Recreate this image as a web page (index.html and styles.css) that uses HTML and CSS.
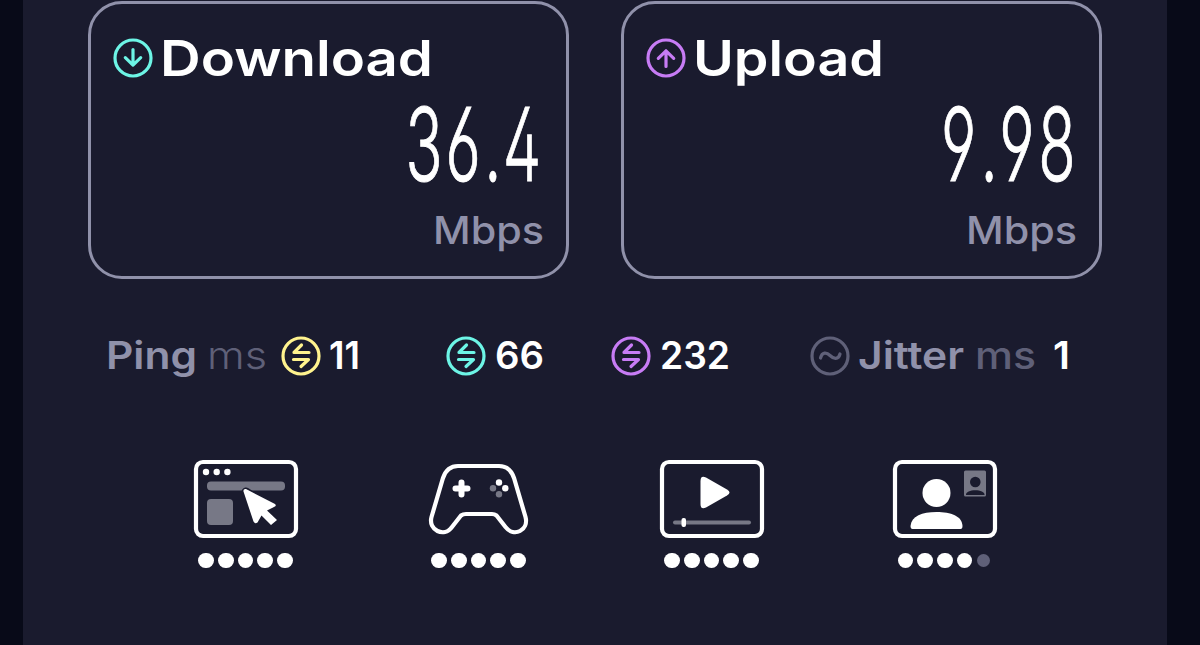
FILE: index.html
```
<!DOCTYPE html>
<html lang="en">
<head>
    <meta charset="UTF-8">
    <meta name="viewport" content="width=device-width, initial-scale=1.0">
    <title>Speed Test Results</title>
    <link rel="stylesheet" href="styles.css">
</head>
<body>
    <div class="panel">
        <div class="cards">
            <div class="card">
                <div class="card-title">
                    <svg class="ring cyan" viewBox="0 0 40 40"><circle cx="20" cy="20" r="18"/><path d="M20 11.500v15.500M12.300 19.700l7.700 7.500 7.700-7.500"/></svg>
                    <svg class="title" width="290" height="60"><text x="3" y="48" textLength="273" lengthAdjust="spacingAndGlyphs">Download</text></svg>
                </div>
                <svg class="speed" width="150" height="90"><text transform="scale(.6 1)" x="20.800 87.500 152 183" y="80">36.4</text></svg>
                <svg class="unit" width="120" height="50"><text x="8" y="33" textLength="111" lengthAdjust="spacingAndGlyphs">Mbps</text></svg>
            </div>
            <div class="card">
                <div class="card-title">
                    <svg class="ring purple" viewBox="0 0 40 40"><circle cx="20" cy="20" r="18"/><path d="M20 28.500V13M12.300 20.300l7.700-7.500 7.700 7.500"/></svg>
                    <svg class="title" width="290" height="60"><text x="3" y="48" textLength="191" lengthAdjust="spacingAndGlyphs">Upload</text></svg>
                </div>
                <svg class="speed" width="150" height="90"><text transform="scale(.6 1)" x="25 91 122 187" y="80">9.98</text></svg>
                <svg class="unit" width="120" height="50"><text x="8" y="33" textLength="111" lengthAdjust="spacingAndGlyphs">Mbps</text></svg>
            </div>
        </div>

        <div class="stats">
            <div class="stat ping">
                <svg class="label" width="91" height="50"><text x="0" y="38" textLength="91" lengthAdjust="spacingAndGlyphs">Ping</text></svg>
                <svg class="label ms thin" width="60" height="50"><text x="0" y="38" textLength="60" lengthAdjust="spacingAndGlyphs">ms</text></svg>
                <svg class="ring yellow" viewBox="0 0 40 40"><circle cx="20" cy="20" r="18"/><path d="M28 16.500H13L20.500 9M12.500 23.500H27.500L20 30.500"/></svg>
                <svg class="label value" width="30" height="50"><text x="0" y="38" textLength="31" lengthAdjust="spacingAndGlyphs">11</text></svg>
            </div>
            <div class="stat down">
                <svg class="ring cyan" viewBox="0 0 40 40"><circle cx="20" cy="20" r="18"/><path d="M28 16.500H13L20.500 9M12.500 23.500H27.500L20 30.500"/></svg>
                <svg class="label value" width="50" height="50"><text x="0" y="38" textLength="49" lengthAdjust="spacingAndGlyphs">66</text></svg>
            </div>
            <div class="stat up">
                <svg class="ring purple" viewBox="0 0 40 40"><circle cx="20" cy="20" r="18"/><path d="M28 16.500H13L20.500 9M12.500 23.500H27.500L20 30.500"/></svg>
                <svg class="label value" width="72" height="50"><text x="0" y="38" textLength="70" lengthAdjust="spacingAndGlyphs">232</text></svg>
            </div>
            <div class="stat jitter">
                <svg class="ring gray" viewBox="0 0 40 40"><circle cx="20" cy="20" r="18"/><path d="M10.500 22C12 16 16.500 16 20 19.500S28.500 24 30 18"/></svg>
                <svg class="label" width="108" height="50"><text x="0" y="38" textLength="106" lengthAdjust="spacingAndGlyphs">Jitter</text></svg>
                <svg class="label ms" width="62" height="50"><text x="0" y="38" textLength="61" lengthAdjust="spacingAndGlyphs">ms</text></svg>
                <svg class="label value" width="18" height="50"><text x="0" y="38" textLength="17" lengthAdjust="spacingAndGlyphs">1</text></svg>
            </div>
        </div>

        <div class="scores">
            <div class="score">
                <svg class="picture" viewBox="0 0 104 78">
                    <rect class="frame" x="2" y="2" width="100" height="74" rx="7"/>
                    <g class="solid"><circle cx="12" cy="12" r="3.2"/><circle cx="22.7" cy="12" r="3.2"/><circle cx="33.4" cy="12" r="3.2"/></g>
                    <rect class="dim" x="13" y="21.500" width="78" height="9" rx="4"/>
                    <rect class="dim" x="13" y="39" width="26" height="26" rx="4"/>
                    <path class="cutout" d="M52 32 61 58 66 56 76 48Z"/>
                    <path class="solid" d="M49.500 31.500Q49 28.500 52 29L81 44Q83 46 80 47L73 50.500 83 60 77 65 67.500 55.500 63.500 62.500Q61 64.500 59.500 61.500Z"/>
                </svg>
                <div class="dots"><i></i><i></i><i></i><i></i><i></i></div>
            </div>
            <div class="score">
                <svg class="picture" viewBox="0 0 104 78">
                    <path class="frame" d="M31 6H72Q83 6 87 18L98.500 57C102 70 87 78 78.500 67L69.500 55.500Q67.500 54 65 54H39Q36 54 34 55.500L25 67C17 78 1 70 4.500 57L16 18Q20 6 31 6Z"/>
                    <path class="cross" d="M34.500 22.500V34.500M28.500 28.500H40.500"/>
                    <g class="solid"><circle cx="72" cy="22.500" r="3.200"/><circle cx="78.300" cy="28.300" r="3.200"/></g>
                    <g class="dim"><circle cx="66" cy="28.300" r="3.200"/><circle cx="72" cy="34.200" r="3.200"/></g>
                </svg>
                <div class="dots"><i></i><i></i><i></i><i></i><i></i></div>
            </div>
            <div class="score">
                <svg class="picture" viewBox="0 0 104 78">
                    <rect class="frame" x="2" y="2" width="100" height="74" rx="7"/>
                    <path class="solid" d="M40.500 21Q40.500 15 46 17.500L67 29.500Q72 32.500 67 35.500L46 47.500Q40.500 50 40.500 44Z"/>
                    <rect class="dim" x="13" y="60.500" width="78" height="4" rx="2"/>
                    <rect class="solid" x="21.500" y="58" width="4.500" height="9" rx="2"/>
                </svg>
                <div class="dots"><i></i><i></i><i></i><i></i><i></i></div>
            </div>
            <div class="score">
                <svg class="picture" viewBox="0 0 104 78">
                    <rect class="frame" x="2" y="2" width="100" height="74" rx="7"/>
                    <circle class="solid" cx="43.500" cy="33" r="14"/>
                    <path class="solid" d="M19.500 69Q17.500 69 17.500 66C18.500 56 29 52 43.500 52S69 56 69.500 66Q69.500 69 67.500 69Z"/>
                    <rect class="dim" x="71" y="10.500" width="22" height="26" rx="1.500"/>
                    <g class="person"><circle cx="82.300" cy="22" r="5.300"/><path d="M73 35C72 28.500 92.500 28.500 91.500 35Z"/></g>
                </svg>
                <div class="dots"><i></i><i></i><i></i><i></i><i class="off"></i></div>
            </div>
        </div>
    </div>
</body>
</html>
```
FILE: styles.css
```
* { box-sizing: border-box; }
body { margin: 0; background: #080a18; font-family: Inter, "Liberation Sans", sans-serif; overflow: hidden; }
svg { display: block; flex: none; overflow: visible; }

.panel { width: 1144px; height: 645px; margin-left: 23px; padding: 1px 65px 0; background: #1a1b2e; }

.cards { display: flex; gap: 52px; }
.card { width: 481px; height: 278px; border: 3px solid #9091aa; border-radius: 34px; padding: 23px 21px 0 22px; display: flex; flex-direction: column; align-items: flex-end; }
.card-title { display: flex; width: 100%; height: 62px; align-items: center; gap: 4px; }
.title text { fill: #fff; font-size: 50px; font-weight: 600; }
.speed { margin-top: 12px; margin-right: 2px; }
.speed text { fill: #fff; stroke: #fff; stroke-width: 1px; font-size: 102px; font-weight: 300; font-feature-settings: "cv03", "cv04", "cv02"; }
.unit { margin-top: 20px; }
.unit text { fill: #9091aa; font-size: 38px; font-weight: 500; }

.ring { width: 40px; height: 40px; fill: none; stroke: currentColor; stroke-width: 3.2; stroke-linecap: round; stroke-linejoin: round; }
.cyan { color: #6df5e6; }
.purple { color: #c77cf5; }
.yellow { color: #fff38e; }
.gray { color: #5f6078; }

.stats { display: flex; margin-top: 52px; padding-left: 18px; height: 50px; align-items: center; }
.stat { display: flex; align-items: center; }
.label text { fill: #9091aa; font-size: 38px; font-weight: 600; }
.label.ms text { fill: #5f6078; font-weight: 500; }
.label.thin text { font-weight: 300; }
.label.value text { fill: #fff; }
.ping { width: 340px; }
.ping .ms { margin: 0 14px 0 10px; }
.ping .value { margin-left: 8px; }
.down { width: 165px; }
.down .value, .up .value { margin-left: 9px; }
.up { width: 199px; }
.jitter .label { margin-left: 8px; }
.jitter .ms { margin-left: 9px; }
.jitter .value { margin-left: 16px; }

.scores { display: flex; gap: 129px; margin-top: 79px; padding-left: 105.500px; }
.picture { width: 104px; height: 78px; }
.frame { fill: none; stroke: #fff; stroke-width: 4.2; }
.solid { fill: #fff; }
.dim { fill: #777886; }
.cross { fill: none; stroke: #fff; stroke-width: 6; stroke-linecap: round; }
.cutout { fill: #1a1b2e; stroke: #1a1b2e; stroke-width: 9; stroke-linejoin: round; }
.person { fill: #1a1b2e; }
.dots { display: flex; justify-content: center; align-items: center; gap: 4.2px; height: 16px; margin-top: 14.500px; }
.dots i { width: 15.500px; height: 15.500px; border-radius: 50%; background: #fff; }
.dots .off { width: 13px; height: 13px; margin: 0 1px; background: #5f6078; }
```
